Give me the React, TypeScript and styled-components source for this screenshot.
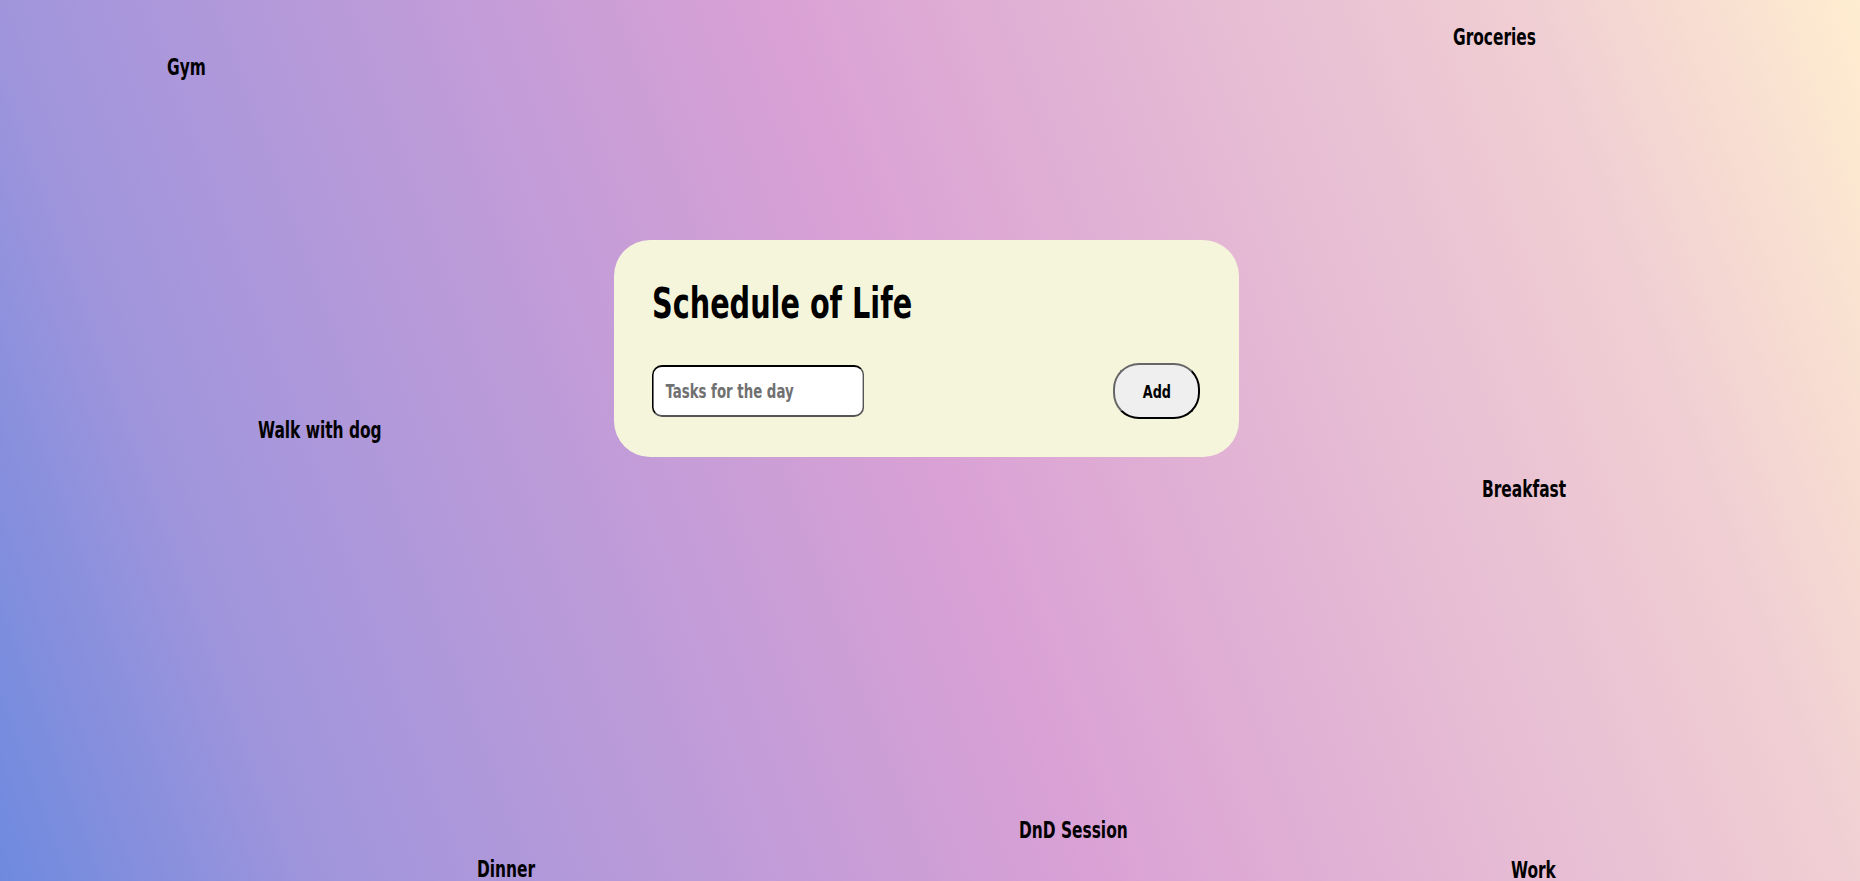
import React from "react";
import styled, { createGlobalStyle } from "styled-components";

const GlobalStyle = createGlobalStyle`
  html, body {
    margin: 0;
    padding: 0;
  }
  body {
    font-family: Impact, "DejaVu Sans Condensed", "DejaVu Sans", sans-serif;
    font-weight: 700;
  }
`;

const Stage = styled.div`
  position: relative;
  width: 1860px;
  height: 881px;
  overflow: hidden;
  box-sizing: border-box;
  padding: 240px 0 0 614px;
  background: linear-gradient(
    70deg,
    #6e8ade 0%,
    #a095dc 14.6%,
    #d9a1d5 50%,
    #f0cfd3 85%,
    #ffedd0 100%
  );
`;

const Card = styled.section`
  width: 625px;
  height: 217px;
  box-sizing: border-box;
  padding: 42px 39px 38px 38px;
  background: #f5f5dc;
  border-radius: 36px;
  display: flex;
  flex-direction: column;
  gap: 38px;
`;

const Title = styled.h1`
  margin: 0;
  font-size: 43px;
  line-height: 43px;
  font-weight: 700;
  color: #000;
  white-space: nowrap;
  transform: scaleX(0.742);
  transform-origin: left center;
`;

const Row = styled.form`
  display: flex;
  align-items: center;
  justify-content: space-between;
  height: 56px;
  margin: 0;
`;

/* The input is drawn narrowed (to mimic a condensed face) and its
   horizontal borders/radius are pre-widened so they end up even. */
const TaskInput = styled.input`
  width: 272px;
  height: 52px;
  box-sizing: border-box;
  padding: 0 0 0 15.4px;
  border-style: solid;
  border-width: 2px 2.56px;
  border-color: #000 #555 #555 #000;
  border-radius: 12.8px / 10px;
  background: #fff;
  font-family: inherit;
  font-weight: 700;
  font-size: 19px;
  color: #000;
  outline: none;
  transform: scaleX(0.78);
  transform-origin: left center;
  &::placeholder {
    color: #707070;
  }
`;

const AddButton = styled.button`
  width: 87px;
  height: 56px;
  box-sizing: border-box;
  border-width: 2px;
  border-style: solid;
  border-color: #666 #000 #000 #666;
  border-radius: 26px;
  background: #efefef;
  font-family: inherit;
  font-weight: 700;
  font-size: 18px;
  color: #000;
  padding: 0;
  display: flex;
  align-items: center;
  justify-content: center;
  cursor: pointer;
`;

const Narrow = styled.span`
  display: inline-block;
  transform: scaleX(0.79);
`;

const Label = styled.span<{ $x: number; $y: number }>`
  position: absolute;
  left: ${(p) => p.$x}px;
  top: ${(p) => p.$y - 19.4}px;
  font-size: 23px;
  line-height: 23px;
  color: #000;
  white-space: nowrap;
  transform: scaleX(0.745);
  transform-origin: left center;
`;

const tasks = [
  { text: "Gym", x: 167, y: 75 },
  { text: "Groceries", x: 1453, y: 45 },
  { text: "Walk with dog", x: 258, y: 438 },
  { text: "Breakfast", x: 1482, y: 497 },
  { text: "DnD Session", x: 1019, y: 838 },
  { text: "Dinner", x: 477, y: 877 },
  { text: "Work", x: 1511, y: 878 },
];

export default function App() {
  return (
    <>
      <GlobalStyle />
      <Stage>
        <Card>
          <Title>Schedule of Life</Title>
          <Row onSubmit={(e) => e.preventDefault()}>
            <TaskInput placeholder="Tasks for the day" />
            <AddButton type="submit">
              <Narrow>Add</Narrow>
            </AddButton>
          </Row>
        </Card>
        {tasks.map((t) => (
          <Label key={t.text} $x={t.x} $y={t.y}>
            {t.text}
          </Label>
        ))}
      </Stage>
    </>
  );
}
